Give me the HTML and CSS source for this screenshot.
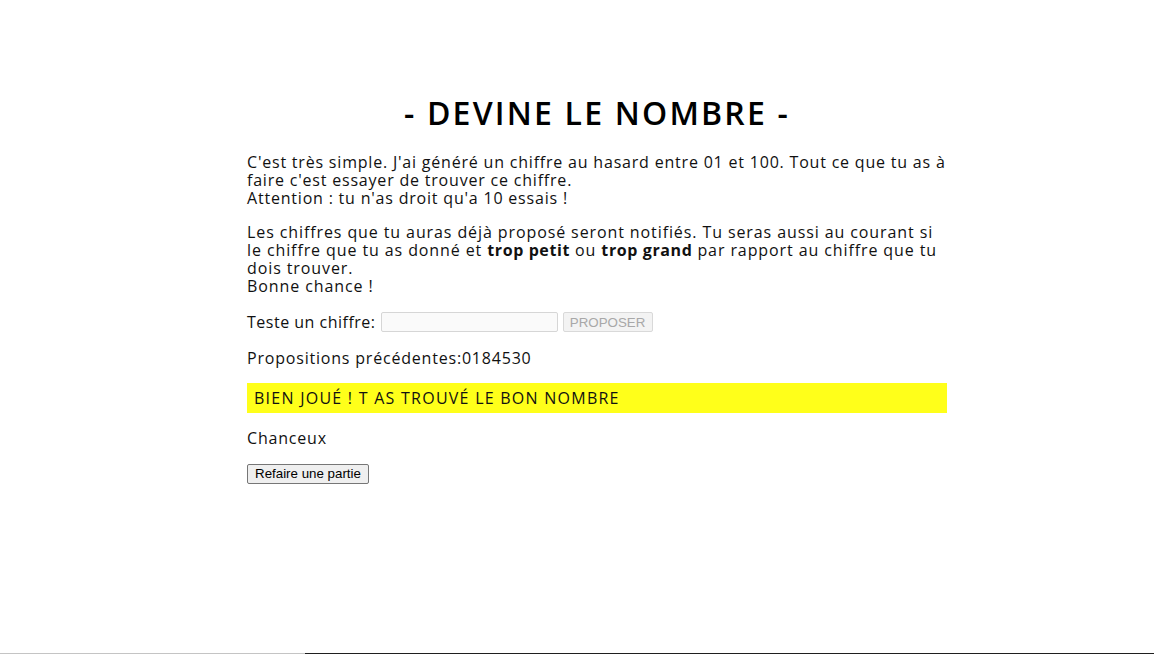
FILE: index.html
```html
<!DOCTYPE html>
<html lang="fr">
<head>
<meta charset="utf-8">
<title>Devine le nombre</title>
<link rel="stylesheet" href="styles.css">
</head>
<body>
<main class="page">
  <h1 class="title">- DEVINE LE NOMBRE -</h1>
  <p class="text intro">C'est très simple. J'ai généré un chiffre au hasard entre 01 et 100. Tout ce que tu as à faire c'est essayer de trouver ce chiffre.<br>Attention : tu n'as droit qu'a 10 essais !</p>
  <p class="text rules">Les chiffres que tu auras déjà proposé seront notifiés. Tu seras aussi au courant si le chiffre que tu as donné et <strong>trop petit</strong> ou <strong>trop grand</strong> par rapport au chiffre que tu dois trouver.<br>Bonne chance !</p>
  <div class="form-row">
    <label class="label" for="guess">Teste un chiffre:</label>
    <input class="guess-input" id="guess" type="text" disabled>
    <button class="propose-btn" disabled>PROPOSER</button>
  </div>
  <p class="text">Propositions précédentes:0184530</p>
  <p class="result">BIEN JOUÉ ! T AS TROUVÉ LE BON NOMBRE</p>
  <p class="text">Chanceux</p>
  <button class="replay-btn">Refaire une partie</button>
</main>
<div class="bottom-edge"><span class="edge-light"></span><span class="edge-dark"></span></div>
</body>
</html>
```
FILE: styles.css
```css
html, body {
  margin: 0;
  padding: 0;
  background: #fff;
}
body {
  margin: 8px;
  font-family: "Open Sans", "DejaVu Sans", sans-serif;
  font-size: 16px;
  line-height: 18px;
  letter-spacing: 0.8px;
  color: #111;
}
.page {
  width: 700px;
  margin: 0 auto;
  padding-left: 40px;
  padding-top: 87px;
}
.title {
  margin: 0 0 22px;
  font-size: 32px;
  line-height: 36px;
  font-weight: 600;
  letter-spacing: 2.2px;
  text-align: center;
  color: #000;
}
.text {
  margin: 0 0 16px;
}
.intro {
  letter-spacing: 0.8px;
}
.rules {
  letter-spacing: 0.9px;
}
.text strong {
  font-weight: 700;
  letter-spacing: 0.6px;
}
.form-row {
  display: flex;
  align-items: center;
  height: 22px;
  margin: 0 0 16px;
}
.label {
  margin-right: 5px;
  letter-spacing: 0.5px;
}
.guess-input {
  box-sizing: border-box;
  width: 177px;
  height: 20px;
  margin: 0 5px 0 0;
  padding: 1px 2px;
  border: 1px solid #d6d6d6;
  border-radius: 2px;
  background: #fafafa;
}
.propose-btn {
  box-sizing: border-box;
  width: 90px;
  height: 20px;
  margin: 0;
  padding: 0 6px;
  font-family: "Liberation Sans", Arial, sans-serif;
  font-size: 13.33px;
  letter-spacing: 0;
  color: #a8a8a8;
  background: #f3f3f3;
  border: 1px solid #d9d9d9;
  border-radius: 2px;
}
.result {
  margin: 0 0 16px;
  padding: 6px 7px;
  background: #ffff1a;
  color: #111;
  letter-spacing: 1.25px;
}
.replay-btn {
  box-sizing: border-box;
  height: 20px;
  margin: 0;
  padding: 1px 7px;
  font-family: "Liberation Sans", Arial, sans-serif;
  font-size: 13.33px;
  letter-spacing: 0;
  color: #000;
  background: #efefef;
  border: 1px solid #767676;
  border-radius: 2px;
}
.bottom-edge {
  position: fixed;
  left: 0;
  right: 0;
  bottom: 0;
  height: 1px;
  display: flex;
}
.edge-light {
  width: 305px;
  background: #c4c4c4;
}
.edge-dark {
  flex: 1;
  background: #1f1f1f;
}
```
